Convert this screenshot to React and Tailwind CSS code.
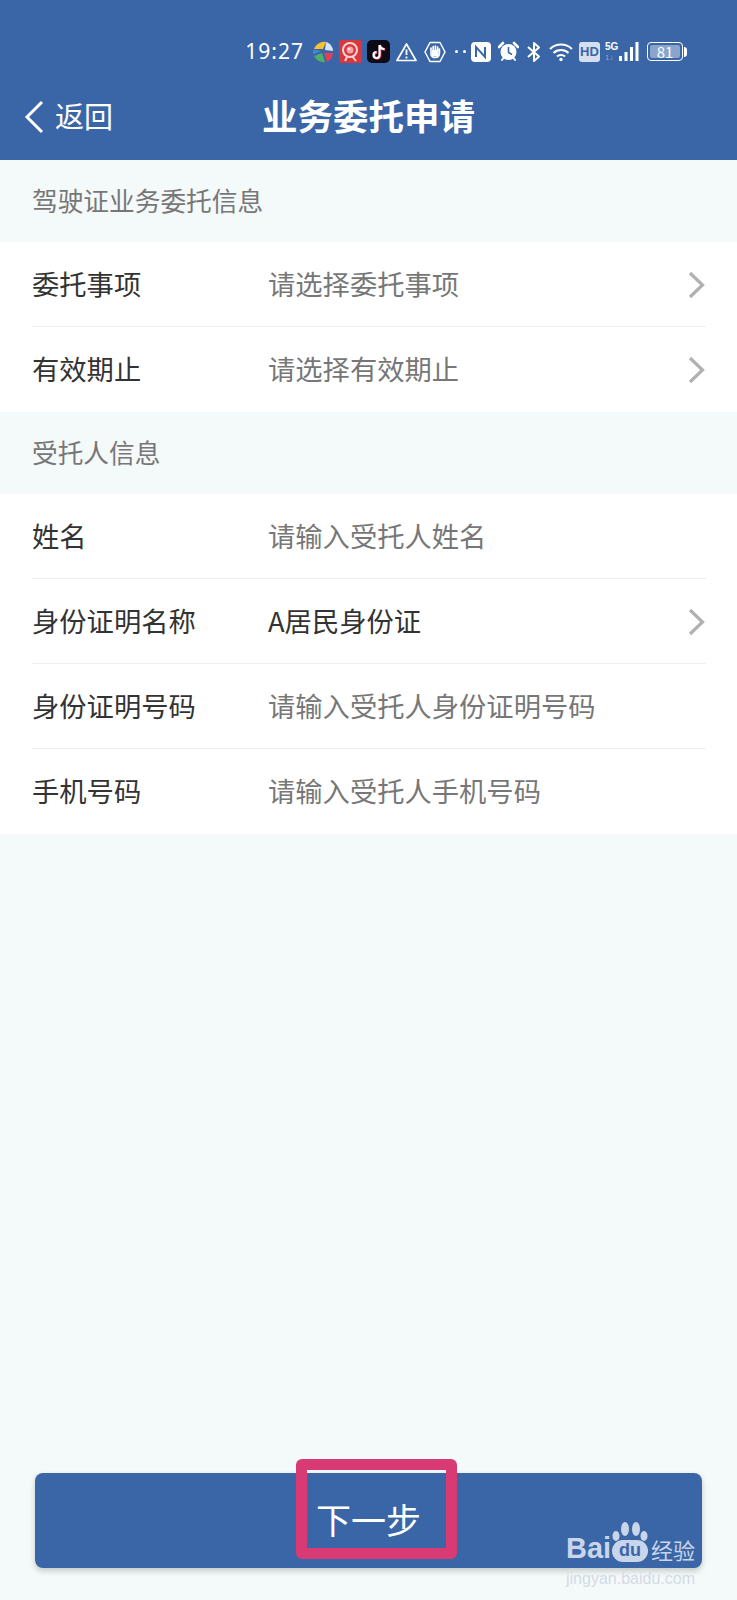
const font = { fontFamily: '"Noto Sans CJK SC", "Noto Sans", sans-serif' };

function Pinwheel() {
  return (
    <svg width="22" height="22" viewBox="0 0 22 22">
      <path d="M2 8 C4 3 9 0 14 1 L11 8 Z" fill="#f2c230" />
      <path d="M14 1 C18 2 21 6 21 10 L13 9 Z" fill="#d8e4f4" />
      <path d="M21 12 C21 16 19 19 15 21 L12 12 Z" fill="#e0405a" />
      <path d="M13 21 C8 22 3 18 2 15 L10 12 Z" fill="#4fae6a" />
      <path d="M1 13 C1 11 1 10 2 9 L9 10 Z" fill="#3f8fe0" />
    </svg>
  );
}

function RedApp() {
  return (
    <svg width="23" height="23" viewBox="0 0 23 23">
      <rect width="23" height="23" rx="2" fill="#d9363e" />
      <circle cx="11" cy="10" r="7" fill="none" stroke="#f6d5d5" strokeWidth="2" />
      <circle cx="11" cy="10" r="3.5" fill="#f6a5a5" />
      <circle cx="10" cy="9" r="1" fill="#fff" />
      <path d="M13 16 L17 21 M8 17 L6 21" stroke="#f6d5d5" strokeWidth="2" />
    </svg>
  );
}

function TikTok() {
  return (
    <svg width="23" height="23" viewBox="0 0 23 23">
      <rect width="23" height="23" rx="5" fill="#0c0a14" />
      <path d="M12.5 5 V15 A3 3 0 1 1 9.5 12 M12.5 5 C13 7.5 15 9 17.5 9" fill="none" stroke="#ff2b55" strokeWidth="2.4" transform="translate(.7 .5)" />
      <path d="M12.5 5 V15 A3 3 0 1 1 9.5 12 M12.5 5 C13 7.5 15 9 17.5 9" fill="none" stroke="#fff" strokeWidth="2.2" />
    </svg>
  );
}

function Warn() {
  return (
    <svg width="21" height="20" viewBox="0 0 21 20" fill="none" stroke="#fff">
      <path d="M10.5 2 L20 18.5 H1 Z" strokeWidth="1.7" strokeLinejoin="round" />
      <path d="M10.5 7.5 V13 M10.5 14.5 V16.5" strokeWidth="1.8" />
    </svg>
  );
}

function HandStop() {
  return (
    <svg width="22" height="22" viewBox="0 0 22 22">
      <path d="M6 1.5 H16 L21 11 L16 20.5 H6 L1 11 Z" fill="none" stroke="#fff" strokeWidth="1.5" strokeLinejoin="round" />
      <path d="M7 11 V7 M9.2 10 V5.5 M11.4 10 V5 M13.6 10 V6 M15.4 12 V8 M7 10 V13 C7 15 9 16.5 11 16.5 C13.5 16.5 15.4 15 15.4 12" fill="none" stroke="#fff" strokeWidth="1.7" strokeLinecap="round" />
      <rect x="8" y="9" width="6.5" height="6.5" fill="#fff" />
    </svg>
  );
}

function Nfc() {
  return (
    <svg width="20" height="20" viewBox="0 0 20 20">
      <rect width="20" height="20" rx="4" fill="#fff" />
      <path d="M5 15 V5 L14 15 V5" fill="none" stroke="#3a66a8" strokeWidth="2" />
    </svg>
  );
}

function Alarm() {
  return (
    <svg width="21" height="21" viewBox="0 0 21 21">
      <circle cx="10.5" cy="11" r="8" fill="#fff" />
      <path d="M1 6 L5 2 M20 6 L16 2" stroke="#fff" strokeWidth="2.6" strokeLinecap="round" />
      <path d="M4 19 L5.5 17 M17 19 L15.5 17" stroke="#fff" strokeWidth="2" strokeLinecap="round" />
      <path d="M10.5 6 V11.5 L14 13.5" fill="none" stroke="#3a66a8" strokeWidth="1.6" />
    </svg>
  );
}

function Bluetooth() {
  return (
    <svg width="16" height="22" viewBox="0 0 16 22" fill="none" stroke="#fff" strokeWidth="2">
      <path d="M2 6 L13 15.5 L8 20 V2 L13 6.5 L2 16" strokeLinejoin="round" />
    </svg>
  );
}

function Wifi() {
  return (
    <svg width="24" height="20" viewBox="0 0 24 20" fill="none" stroke="#fff" strokeWidth="2">
      <path d="M1 7 C7 1 17 1 23 7" />
      <path d="M4.5 11 C8.5 7 15.5 7 19.5 11" />
      <path d="M8 14.5 C10 12.5 14 12.5 16 14.5" />
      <circle cx="12" cy="17.5" r="1.7" fill="#fff" stroke="none" />
    </svg>
  );
}

function Signal() {
  return (
    <svg width="20" height="20" viewBox="0 0 20 20" fill="#fff">
      <rect x="0" y="14" width="3" height="5" />
      <rect x="5.5" y="10" width="3" height="9" />
      <rect x="11" y="5" width="3" height="14" />
      <rect x="16.5" y="0" width="3" height="19" />
    </svg>
  );
}

function Battery() {
  return (
    <div className="flex items-center">
      <div className="w-[36px] h-[19px] rounded-[4px] border border-white p-[2px]">
        <div className="w-full h-full rounded-[2px] bg-[#8aa5cd] text-white text-[15px] leading-[13px] text-center">81</div>
      </div>
      <div className="w-[3px] h-[10px] ml-[1px] rounded-r-sm bg-white" />
    </div>
  );
}

function StatusBar() {
  return (
    <div className="h-[75px] pt-[40px] pr-[50px] flex justify-end items-start">
      <div className="flex items-center h-[23px] text-white">
        <span className="text-[21px] leading-[23px] tracking-[1px] mr-[8px]" style={{ fontFamily: '"Noto Sans", sans-serif' }}>19:27</span>
        <div className="mr-[5px]"><Pinwheel /></div>
        <div className="mr-[5px]"><RedApp /></div>
        <div className="mr-[6px]"><TikTok /></div>
        <div className="mr-[7px]"><Warn /></div>
        <div className="mr-[9px]"><HandStop /></div>
        <div className="flex items-center gap-[5px] mr-[5px]">
          <span className="w-[3px] h-[3px] rounded-full bg-white" />
          <span className="w-[3px] h-[3px] rounded-full bg-white" />
        </div>
        <div className="mr-[7px]"><Nfc /></div>
        <div className="mr-[7px]"><Alarm /></div>
        <div className="mr-[7px]"><Bluetooth /></div>
        <div className="mr-[6px]"><Wifi /></div>
        <div className="w-[21px] h-[20px] mr-[5px] rounded-[3px] bg-[#d5dfee] text-[#3a66a8] text-[13px] leading-[20px] font-bold text-center" style={{ fontFamily: '"Liberation Sans", sans-serif' }}>HD</div>
        <div className="relative w-[14px] h-[22px] mr-0">
          <span className="absolute left-0 top-0 text-[10px] leading-[11px] font-bold" style={{ fontFamily: '"Liberation Sans", sans-serif' }}>5G</span>
          <span className="absolute left-0 top-[12px] text-[8px] leading-[9px] text-[#8aa5cd]" style={{ fontFamily: '"Liberation Sans", sans-serif' }}>1↓</span>
        </div>
        <div className="mr-[8px]"><Signal /></div>
        <Battery />
      </div>
    </div>
  );
}

function Chevron() {
  return (
    <svg width="17" height="28" viewBox="0 0 17 28" fill="none" stroke="#b1b1b1" strokeWidth="3.2" className="absolute right-[32px] top-[29px]">
      <path d="M2 2 L14.5 14 L2 26" />
    </svg>
  );
}

function SectionTitle({ children }) {
  return (
    <div className="h-[82px] pl-[32px] pb-[1px] flex items-center text-[25.7px] text-[#777]">
      {children}
    </div>
  );
}

function Row({ label, value, placeholder = true, arrow = false, divider = true }) {
  return (
    <div className="relative h-[85px] pl-[32px]">
      <div className="flex items-center h-full pr-[31px] pb-[2px]">
        <span className="w-[236px] text-[27.3px] text-[#333]">{label}</span>
        <span className={`text-[27.3px] ${placeholder ? "text-[#777]" : "text-[#333]"}`}>{value}</span>
      </div>
      {arrow && <Chevron />}
      {divider && <div className="absolute left-[32px] right-[31px] bottom-0 h-[1px] bg-[#eeeeee]" />}
    </div>
  );
}

function BaiduMark() {
  return (
    <div className="absolute left-[566px] top-[1522px] w-[140px] h-[62px] pointer-events-none">
      <svg width="38" height="24" viewBox="0 0 38 24" fill="#c9d5e8" className="absolute left-[45px] top-0">
        <ellipse cx="5" cy="14" rx="3.5" ry="5" />
        <ellipse cx="14" cy="7" rx="4" ry="7" />
        <ellipse cx="25" cy="7" rx="4" ry="7" />
        <ellipse cx="33" cy="14" rx="3.5" ry="5" />
      </svg>
      <div className="flex items-end h-[40px] whitespace-nowrap text-[#c9d5e8] font-bold" style={{ fontFamily: '"Liberation Sans", sans-serif' }}>
        <span className="w-[45px] text-[29px] leading-[27px]">Bai</span>
        <span className="ml-[1px] w-[36px] h-[22px] rounded-full bg-[#c9d5e8] text-[#3a66a8] text-[18px] leading-[21px] text-center">du</span>
        <span className="ml-[3px] text-[22px] leading-[25px] font-normal" style={font}>经验</span>
      </div>
      <div className="mt-[8px] text-[16px] leading-[18px] text-[#d4dbe6] whitespace-nowrap" style={{ fontFamily: '"Liberation Sans", sans-serif' }}>jingyan.baidu.com</div>
    </div>
  );
}

export default function App() {
  return (
    <div className="relative w-[737px] h-[1600px] flex flex-col bg-[#f4f9fa] overflow-hidden" style={font}>
      <header className="h-[160px] bg-[#3a66a8]">
        <StatusBar />
        <div className="relative h-[85px] pb-[6px] flex items-center justify-center">
          <div className="absolute left-[24px] top-[25px] flex items-center text-white">
            <svg width="20" height="34" viewBox="0 0 20 34" fill="none" stroke="#fff" strokeWidth="3">
              <path d="M18 2 L3 17 L18 32" />
            </svg>
            <span className="ml-[11px] -mt-[4px] text-[29px] leading-[34px]">返回</span>
          </div>
          <h1 className="text-[35.5px] leading-[50px] font-bold text-white">业务委托申请</h1>
        </div>
      </header>

      <main className="flex-1">
        <SectionTitle>驾驶证业务委托信息</SectionTitle>
        <div className="bg-white">
          <Row label="委托事项" value="请选择委托事项" arrow />
          <Row label="有效期止" value="请选择有效期止" arrow divider={false} />
        </div>
        <SectionTitle>受托人信息</SectionTitle>
        <div className="bg-white">
          <Row label="姓名" value="请输入受托人姓名" />
          <Row label="身份证明名称" value="A居民身份证" placeholder={false} arrow />
          <Row label="身份证明号码" value="请输入受托人身份证明号码" />
          <Row label="手机号码" value="请输入受托人手机号码" divider={false} />
        </div>
      </main>

      <div className="px-[35px] pb-[32px]">
        <button className="w-full h-[95px] rounded-[8px] bg-[#3a66a8] shadow-[0_3px_6px_rgba(0,0,0,0.2)] text-white text-[35px] pb-[2px]">
          下一步
        </button>
      </div>

      {/* 红框和水印盖在按钮上面 */}
      <div className="absolute left-[296px] top-[1459px] w-[161px] h-[100px] rounded-[6px] border-[11px] border-[#d83a73]">
        <div className="h-[2px] bg-[#f3f5f9]" />
      </div>
      <BaiduMark />
    </div>
  );
}
